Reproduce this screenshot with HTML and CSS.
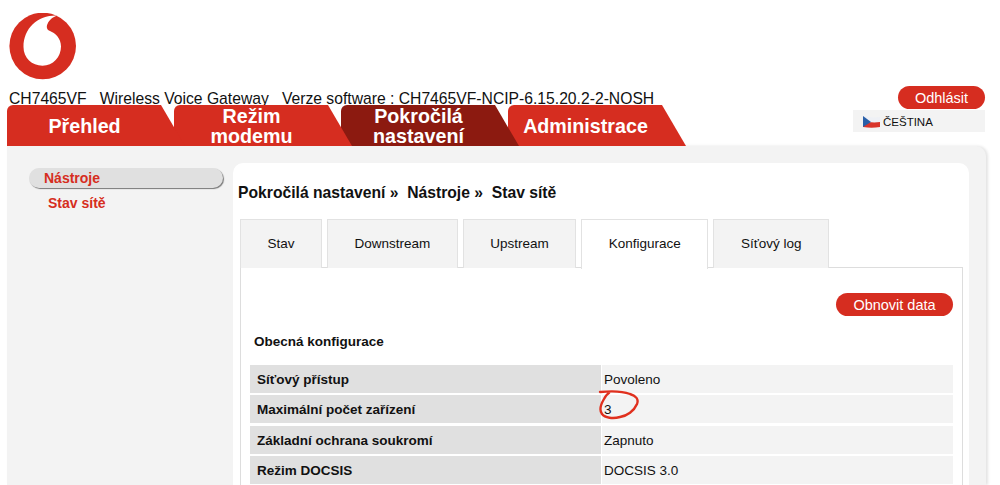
FILE: index.html
```html
<!DOCTYPE html>
<html lang="cs">
<head>
    <meta charset="UTF-8">
    <meta name="viewport" content="width=device-width, initial-scale=1.0">
    <title>Stav sítě</title>
    <link rel="stylesheet" href="styles.css">
</head>
<body>

<div class="masthead">
    <div class="brand">
        <svg class="logo" viewBox="9 13 67 67" width="67" height="67">
            <circle cx="42.7" cy="46" r="33.3" fill="#d62d20"/>
            <path fill="#fff" d="M57 15.5C38 15 23.5 28 23.5 47C23.5 58 32 65.7 42.5 65.7C53 65.7 61 57 61 46.5C61 38 55 33 50 31C47 30 46 27 47.5 24C49 20 53 17 57 15.5Z"/>
        </svg>
        <div class="device-info">CH7465VF   Wireless Voice Gateway   Verze software : CH7465VF-NCIP-6.15.20.2-2-NOSH</div>
    </div>
    <div class="account">
        <button class="logout">Odhlásit</button>
        <div class="language">
            <svg class="flag" viewBox="0 0 17 12" width="17" height="12">
                <path fill="#eef0f5" d="M0 0C6 1 11 2 17 1V6C11 7 6 6 0 6Z"/>
                <path fill="#d9352b" d="M0 6C6 6 11 7 17 6V11C11 12 6 12 0 11Z"/>
                <path fill="#2a5fa8" d="M0 0L8 6L0 11Z"/>
            </svg>
            ČEŠTINA
        </div>
    </div>
</div>

<div class="nav">
    <a class="nav-tab">Přehled</a>
    <a class="nav-tab">Režim<br>modemu</a>
    <a class="nav-tab active">Pokročilá<br>nastavení</a>
    <a class="nav-tab">Administrace</a>
</div>

<div class="panel">
    <div class="sidebar">
        <div class="side-group">Nástroje</div>
        <div class="side-link">Stav sítě</div>
    </div>

    <div class="card">
        <h2 class="crumbs">Pokročilá nastavení »  Nástroje »  Stav sítě</h2>

        <div class="tabs">
            <div class="tab">Stav</div>
            <div class="tab">Downstream</div>
            <div class="tab">Upstream</div>
            <div class="tab current">Konfigurace</div>
            <div class="tab">Síťový log</div>
        </div>

        <div class="tab-body">
            <div class="actions">
                <button class="refresh">Obnovit data</button>
            </div>
            <h3 class="section-title">Obecná konfigurace</h3>
            <div class="config">
                <div class="config-label">Síťový přístup</div>
                <div class="config-value">Povoleno</div>
                <div class="config-label">Maximální počet zařízení</div>
                <div class="config-value marked">3
                    <svg class="scribble" viewBox="0 0 44 34" width="44" height="34">
                        <path fill="none" stroke="#e0301e" stroke-width="2.4" stroke-linecap="round" d="M2 3C12 2 24 2 32 5C38 7 41 10 39 15C36 22 29 27 22 28C15 30 7 29 4 25C1 21 3 15 6 10C7 8 9 5 11 4"/>
                    </svg>
                </div>
                <div class="config-label">Základní ochrana soukromí</div>
                <div class="config-value">Zapnuto</div>
                <div class="config-label">Režim DOCSIS</div>
                <div class="config-value">DOCSIS 3.0</div>
            </div>
        </div>
    </div>
</div>

</body>
</html>
```

FILE: styles.css
```css
html, body {
    height: 485px;
    overflow: hidden;
}

body {
    margin: 0;
    background-color: #FFFFFF;
    color: #111111;
    font-family: "Liberation Sans", Arial, sans-serif;
    display: flex;
    flex-direction: column;
}

.masthead {
    height: 105px;
    flex: none;
    display: flex;
    justify-content: space-between;
}

.brand {
    padding: 13px 0 0 9px;
}

.logo {
    display: block;
}

.device-info {
    margin-top: 12px;
    font-size: 15.7px;
    line-height: 13px;
    white-space: pre;
}

.account {
    height: 19px;
    padding: 86px 15px 0 0;
    width: 132px;
    display: flex;
    flex-direction: column;
    align-items: flex-end;
    position: relative;
    z-index: 5;
}

.logout {
    flex: none;
    width: 87px;
    height: 23px;
    padding: 0;
    border: none;
    border-radius: 12px;
    background-color: #D62D20;
    color: #FFFFFF;
    font-family: inherit;
    font-size: 14.5px;
}

.language {
    flex: none;
    box-sizing: border-box;
    width: 132px;
    height: 22px;
    margin-top: 1px;
    padding: 1px 0 0 10px;
    background-color: #F3F3F3;
    font-size: 11.5px;
    display: flex;
    align-items: center;
    gap: 3px;
}

.flag {
    flex: none;
}

.nav {
    flex: none;
    height: 41px;
    padding-left: 7px;
    display: flex;
}

.nav-tab {
    box-sizing: border-box;
    width: 178px;
    height: 41px;
    margin-right: -11px;
    padding: 1px 23px 0 0;
    background-color: #D62D20;
    border-radius: 6px 0 0 0;
    clip-path: polygon(0 0, 154px 0, 178px 100%, 0 100%);
    color: #FFFFFF;
    font-size: 19.7px;
    font-weight: bold;
    line-height: 20px;
    text-align: center;
    display: flex;
    align-items: center;
    justify-content: center;
    position: relative;
}

.nav-tab:nth-child(1) { z-index: 4; }
.nav-tab:nth-child(2) { z-index: 3; }
.nav-tab:nth-child(3) { z-index: 2; }
.nav-tab:nth-child(4) { z-index: 1; }

.nav-tab.active {
    background-color: #8C1A10;
}

.panel {
    box-sizing: border-box;
    flex: 1;
    min-height: 0;
    width: 979px;
    margin-left: 7px;
    padding: 17px 17px 0 22px;
    background-color: #F3F3F3;
    border-radius: 0 10px 0 0;
    box-shadow: 2px 0 3px #E4E4E4;
    display: flex;
    gap: 10px;
}

.sidebar {
    width: 194px;
    flex: none;
    padding-top: 5px;
}

.side-group {
    box-sizing: border-box;
    height: 20px;
    padding-left: 15px;
    background-color: #E0E0E0;
    border-radius: 10px;
    box-shadow: 1px 1px 1px #777777;
    color: #D62D20;
    font-size: 14px;
    font-weight: bold;
    line-height: 20px;
}

.side-link {
    margin-top: 6px;
    padding-left: 19px;
    color: #D62D20;
    font-size: 14px;
    font-weight: bold;
    line-height: 18px;
}

.card {
    flex: 1;
    padding: 0 6px 0 7px;
    background-color: #FFFFFF;
    border-radius: 10px 10px 0 0;
}

.crumbs {
    margin: 21px 0 17px -2px;
    font-size: 15.7px;
    line-height: 18px;
    white-space: pre;
}

.tabs {
    display: flex;
    gap: 5px;
    height: 49px;
    position: relative;
    z-index: 1;
}

.tab {
    box-sizing: border-box;
    padding: 0 26.5px;
    background-color: #F3F3F3;
    border: 1px solid #E2E2E2;
    border-bottom: none;
    font-size: 13.5px;
    line-height: 47px;
}

.tab.current {
    background-color: #FFFFFF;
    height: 50px;
}

.tab-body {
    box-sizing: border-box;
    height: 218px;
    padding: 25px 9px 0;
    border: 1px solid #DDDDDD;
    border-bottom: none;
    margin-top: -1px;
}

.actions {
    display: flex;
    justify-content: flex-end;
}

.refresh {
    width: 117px;
    height: 23px;
    padding: 0;
    border: none;
    border-radius: 12px;
    background-color: #D62D20;
    color: #FFFFFF;
    font-family: inherit;
    font-size: 14.5px;
}

.section-title {
    margin: 18px 0 15px 4px;
    font-size: 13.5px;
    line-height: 16px;
}

.config {
    display: grid;
    grid-template-columns: 351px 351px;
    grid-auto-rows: 28px;
    column-gap: 1px;
    row-gap: 2.3px;
    font-size: 13.5px;
}

.config-label {
    padding-left: 7px;
    background-color: #E0E0E0;
    font-weight: bold;
    line-height: 29px;
}

.config-value {
    padding-left: 2px;
    background-color: #F3F3F3;
    line-height: 29px;
}

.marked {
    position: relative;
}

.scribble {
    position: absolute;
    left: -4px;
    top: -6px;
}
```
